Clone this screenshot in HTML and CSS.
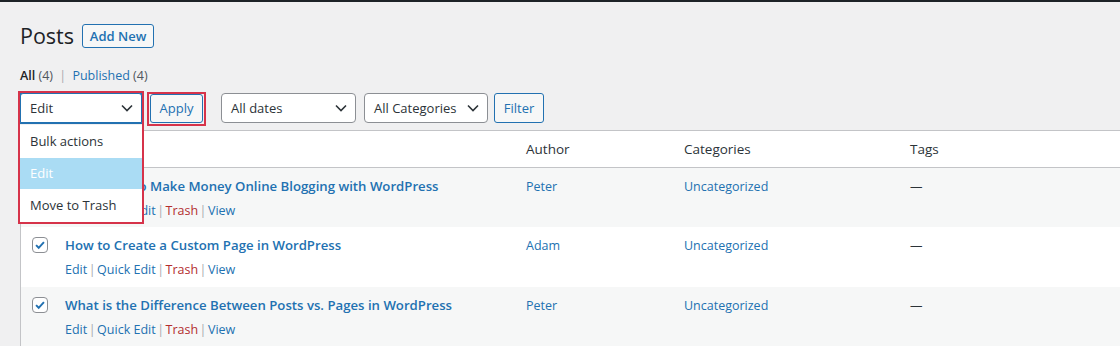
FILE: index.html
```html
<!DOCTYPE html>
<html>
<head>
<meta charset="utf-8">
<link rel="stylesheet" href="styles.css">
</head>
<body>
<div class="adminbar"></div>
<div class="wrap">
  <div class="heading">
    <h1 class="title">Posts</h1>
    <a class="btn add-new">Add New</a>
  </div>
  <div class="subsubsub">
    <span class="current">All</span> <span class="count">(4)</span> <span class="sep">|</span>
    <a class="link">Published</a> <span class="count">(4)</span>
  </div>
  <div class="tablenav">
    <div class="bulk">
      <div class="select focused"><span>Edit</span><svg class="chev" viewBox="0 0 12 8"><path d="M1 1.5l5 5 5-5" fill="none" stroke="#2c3338" stroke-width="1.6"/></svg></div>
      <ul class="dropdown">
        <li>Bulk actions</li>
        <li class="hl">Edit</li>
        <li>Move to Trash</li>
      </ul>
      <div class="mark mark-bulk"></div>
    </div>
    <div class="apply-wrap">
      <a class="btn apply">Apply</a>
      <div class="mark mark-apply"></div>
    </div>
    <div class="select dates"><span>All dates</span><svg class="chev" viewBox="0 0 12 8"><path d="M1 1.5l5 5 5-5" fill="none" stroke="#2c3338" stroke-width="1.6"/></svg></div>
    <div class="select cats"><span>All Categories</span><svg class="chev" viewBox="0 0 12 8"><path d="M1 1.5l5 5 5-5" fill="none" stroke="#2c3338" stroke-width="1.6"/></svg></div>
    <a class="btn filter">Filter</a>
  </div>
  <div class="table">
    <div class="row head">
      <div class="cell cb"><span class="checkbox"></span></div>
      <div class="cell c-title">Title</div>
      <div class="cell">Author</div>
      <div class="cell">Categories</div>
      <div class="cell">Tags</div>
    </div>
    <div class="row alt first">
      <div class="cell cb"><span class="checkbox checked"><svg viewBox="0 0 16 16"><path d="M3.5 8.2l3 3 6-6.5" fill="none" stroke="#2271b1" stroke-width="2.2"/></svg></span></div>
      <div class="cell c-title">
        <a class="post-title">Best Ways to Make Money Online Blogging with WordPress</a>
        <div class="actions"><a class="link">Edit</a><span class="sep">|</span><a class="link">Quick Edit</a><span class="sep">|</span><a class="trash">Trash</a><span class="sep">|</span><a class="link">View</a></div>
      </div>
      <div class="cell"><a class="link">Peter</a></div>
      <div class="cell"><a class="link">Uncategorized</a></div>
      <div class="cell">—</div>
    </div>
    <div class="row">
      <div class="cell cb"><span class="checkbox checked"><svg viewBox="0 0 16 16"><path d="M3.5 8.2l3 3 6-6.5" fill="none" stroke="#2271b1" stroke-width="2.2"/></svg></span></div>
      <div class="cell c-title">
        <a class="post-title">How to Create a Custom Page in WordPress</a>
        <div class="actions"><a class="link">Edit</a><span class="sep">|</span><a class="link">Quick Edit</a><span class="sep">|</span><a class="trash">Trash</a><span class="sep">|</span><a class="link">View</a></div>
      </div>
      <div class="cell"><a class="link">Adam</a></div>
      <div class="cell"><a class="link">Uncategorized</a></div>
      <div class="cell">—</div>
    </div>
    <div class="row alt">
      <div class="cell cb"><span class="checkbox checked"><svg viewBox="0 0 16 16"><path d="M3.5 8.2l3 3 6-6.5" fill="none" stroke="#2271b1" stroke-width="2.2"/></svg></span></div>
      <div class="cell c-title">
        <a class="post-title">What is the Difference Between Posts vs. Pages in WordPress</a>
        <div class="actions"><a class="link">Edit</a><span class="sep">|</span><a class="link">Quick Edit</a><span class="sep">|</span><a class="trash">Trash</a><span class="sep">|</span><a class="link">View</a></div>
      </div>
      <div class="cell"><a class="link">Peter</a></div>
      <div class="cell"><a class="link">Uncategorized</a></div>
      <div class="cell">—</div>
    </div>
  </div>
</div>
</body>
</html>
```

FILE: styles.css
```css
* { box-sizing: border-box; }
html, body { margin: 0; padding: 0; }
body {
  background: #f0f0f1;
  font-family: "Open Sans", "Noto Sans", sans-serif;
  font-size: 13px;
  color: #3c434a;
  overflow: hidden;
  height: 346px;
}
.adminbar { height: 2px; background: #1d2327; }
.wrap { padding-left: 20px; }
.heading {
  display: flex;
  align-items: center;
  margin-top: 19px;
  height: 30px;
}
.title {
  margin: 0;
  font-size: 21.5px;
  font-weight: 400;
  color: #1d2327;
  line-height: 30px;
}
.btn {
  display: inline-flex;
  align-items: center;
  justify-content: center;
  border: 1px solid #2271b1;
  border-radius: 3px;
  background: #f6f7f7;
  color: #2271b1;
  font-size: 13px;
  text-decoration: none;
}
.add-new {
  margin-left: 8px;
  width: 72px;
  height: 24px;
  font-weight: 600;
}
.subsubsub {
  margin-top: 15px;
  line-height: 20px;
  font-size: 12.5px;
  color: #50575e;
}
.subsubsub .current { color: #1d2327; font-weight: 600; }
.subsubsub .sep { color: #a7aaad; margin: 0 3px; }
.link { color: #2271b1; text-decoration: none; }
.trash { color: #b32d2e; text-decoration: none; }
.tablenav {
  display: flex;
  align-items: center;
  margin-top: 7px;
  height: 30px;
}
.bulk { position: relative; width: 122px; height: 30px; }
.select {
  display: flex;
  align-items: center;
  justify-content: space-between;
  height: 30px;
  padding: 0 8px 0 9px;
  border: 1px solid #8c8f94;
  border-radius: 4px;
  background: #fff;
  color: #2c3338;
  font-size: 13px;
}
.select .chev { width: 12px; height: 8px; }
.select.focused {
  width: 122px;
  border-color: #2271b1;
  box-shadow: 0 0 0 1px #2271b1;
  border-radius: 3px 3px 0 0;
}
.dates { width: 135px; margin-left: 18px; }
.cats { width: 124px; margin-left: 8px; }
.filter { width: 50px; height: 30px; margin-left: 6px; }
.dropdown {
  position: absolute;
  left: 0;
  top: 32px;
  width: 122px;
  margin: 0;
  padding: 0;
  list-style: none;
  background: #fff;
  z-index: 5;
}
.dropdown li {
  height: 33px;
  line-height: 33px;
  padding-left: 10px;
  color: #2c3338;
  font-size: 13px;
}
.dropdown li.hl { background: #aadcf4; color: #fff; height: 31px; line-height: 31px; }
.mark {
  position: absolute;
  border: 2px solid #d6334a;
  z-index: 6;
  pointer-events: none;
}
.mark-bulk { left: -2px; top: -2px; width: 126px; height: 133px; }
.apply-wrap { position: relative; margin-left: 8px; }
.apply { width: 53px; height: 29px; font-size: 13px; }
.mark-apply { left: -3px; top: -2px; width: 59px; height: 34px; }
.table {
  margin-top: 7px;
  border-top: 1px solid #c3c4c7;
  border-left: 1px solid #c3c4c7;
  background: #fff;
}
.row {
  display: grid;
  grid-template-columns: 36px 461px 158px 226px 1fr;
  height: 60px;
}
.row.first { height: 59px; }
.row.alt { background: #f6f7f7; }
.row.head {
  height: 37px;
  background: #fff;
  border-bottom: 1px solid #c3c4c7;
  color: #2c3338;
  font-size: 13.5px;
}
.row.head .cell { padding-top: 8px; line-height: 20px; }
.cell {
  padding: 9px 8px 0 8px;
  line-height: 20px;
  color: #2c3338;
  font-size: 12.5px;
}
.cell.c-title { padding-top: 8px; }
.row.head .cell { font-size: 13.5px; }
.cell.cb { padding: 10px 0 0 11px; }
.row.head .cell.cb { padding-top: 10px; }
.checkbox {
  display: block;
  width: 16px;
  height: 16px;
  border: 1px solid #8c8f94;
  border-radius: 4px;
  background: #fff;
}
.checkbox svg { display: block; width: 14px; height: 14px; }
.post-title {
  display: block;
  color: #2271b1;
  font-weight: 600;
  font-size: 13.2px;
  text-decoration: none;
}
.actions {
  margin-top: 5px;
  font-size: 12.5px;
  color: #a7aaad;
}
.actions .sep { color: #a7aaad; margin: 0 1.5px; }
```
